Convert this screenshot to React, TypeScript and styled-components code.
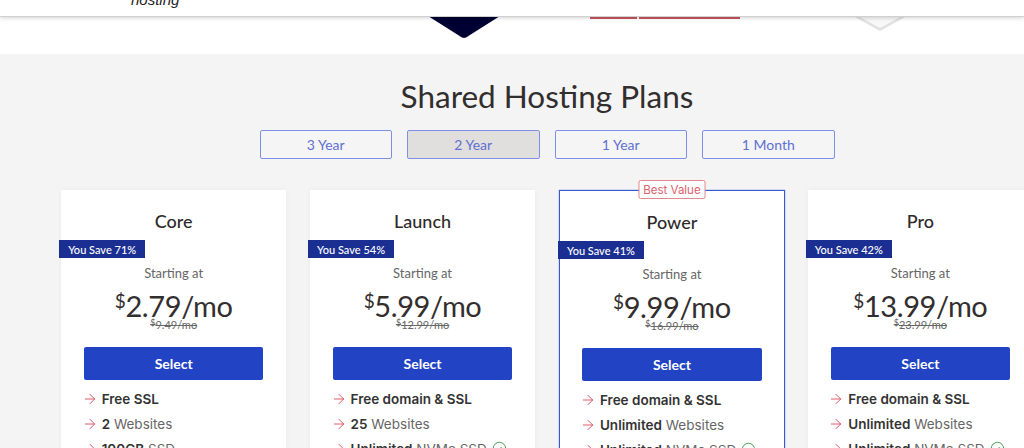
import React from "react";
import styled, { createGlobalStyle } from "styled-components";
import { ArrowRight, CircleCheck } from "lucide-react";

const GlobalStyle = createGlobalStyle`
  html, body {
    margin: 0;
    padding: 0;
    background: #fff;
    overflow: hidden;
  }
  * { box-sizing: border-box; }
`;

const plans = [
  {
    name: "Core",
    save: 71,
    price: "2.79",
    old: "9.49",
    features: [
      { strong: "Free SSL", rest: "" },
      { strong: "2", rest: "Websites" },
      { strong: "100GB", rest: "SSD" },
    ],
  },
  {
    name: "Launch",
    save: 54,
    price: "5.99",
    old: "12.99",
    features: [
      { strong: "Free domain & SSL", rest: "" },
      { strong: "25", rest: "Websites" },
      { strong: "Unlimited", rest: "NVMe SSD", check: true },
    ],
  },
  {
    name: "Power",
    save: 41,
    price: "9.99",
    old: "16.99",
    featured: true,
    features: [
      { strong: "Free domain & SSL", rest: "" },
      { strong: "Unlimited", rest: "Websites" },
      { strong: "Unlimited", rest: "NVMe SSD", check: true },
    ],
  },
  {
    name: "Pro",
    save: 42,
    price: "13.99",
    old: "23.99",
    features: [
      { strong: "Free domain & SSL", rest: "" },
      { strong: "Unlimited", rest: "Websites" },
      { strong: "Unlimited", rest: "NVMe SSD", check: true },
    ],
  },
];

const terms = ["3 Year", "2 Year", "1 Year", "1 Month"];

const App: React.FC = () => {
  return (
    <Page>
      <GlobalStyle />
      <Header>
        <Tagline>hosting</Tagline>
      </Header>

      <Hero>
        <svg width="72" height="22" viewBox="0 0 72 22">
          <path d="M0 0H72L38 21.5Q36 22.4 34 21.5Z" fill="#000033" />
        </svg>
        <RedBars>
          <RedBar $width={47} />
          <RedBar $width={101} />
        </RedBars>
        <svg width="54" height="15" viewBox="0 0 54 15">
          <path d="M0 0H54L27 15Z" fill="#e2e2e2" />
          <path d="M5 0L27 12L49 0Z" fill="#f8f8f8" />
          <path d="M17 0H37V1H17Z" fill="#bbb" />
        </svg>
      </Hero>

      <Plans>
        <Heading>Shared Hosting Plans</Heading>
        <Tabs>
          {terms.map((term) => (
            <Tab key={term} $active={term === "2 Year"}>
              {term}
            </Tab>
          ))}
        </Tabs>
        <Cards>
          {plans.map((plan) => (
            <Card key={plan.name} $featured={plan.featured}>
              {plan.featured && <BestValue>Best Value</BestValue>}
              <PlanName>{plan.name}</PlanName>
              <SaveBadge>You Save {plan.save}%</SaveBadge>
              <Starting>Starting at</Starting>
              <Price>
                <sup>$</sup>
                {plan.price}/mo
              </Price>
              <OldPrice>
                <sup>$</sup>
                {plan.old}/mo
              </OldPrice>
              <SelectButton>Select</SelectButton>
              <Features>
                {plan.features.map((f, index) => (
                  <Feature key={index}>
                    <ArrowRight size={16} strokeWidth={1.4} color="#d8505f" />
                    <span>
                      <b>{f.strong}</b> {f.rest}
                    </span>
                    {f.check && <CircleCheck size={15} strokeWidth={1.5} color="#3f9a4a" />}
                  </Feature>
                ))}
              </Features>
            </Card>
          ))}
        </Cards>
      </Plans>
    </Page>
  );
};

const Page = styled.div`
  position: relative;
  width: 1024px;
  height: 448px;
  overflow: hidden;
  font-family: "Lato", sans-serif;
  color: #333;
`;

const Header = styled.div`
  position: absolute;
  top: 0;
  left: 0;
  right: 0;
  height: 17px;
  padding-left: 131px;
  background: #fff;
  overflow: hidden;
  border-bottom: 1px solid #d0d0d0;
  box-shadow: 0 1px 4px rgba(0, 0, 0, 0.18);
  z-index: 2;
`;

const Tagline = styled.div`
  margin-top: -8px;
  font-family: "Liberation Sans", sans-serif;
  font-style: italic;
  font-size: 15px;
  line-height: 15px;
  color: #222;
`;

const Hero = styled.div`
  display: flex;
  align-items: flex-start;
  height: 54px;
  padding: 16px 0 0 428px;
  background: #fff;

  & > svg:last-child {
    margin-left: 113px;
  }
`;

const RedBars = styled.div`
  display: flex;
  gap: 2px;
  margin-left: 90px;
`;

const RedBar = styled.div<{ $width: number }>`
  width: ${(props) => props.$width}px;
  height: 3px;
  background: #c9555c;
`;

const Plans = styled.div`
  width: 1094px;
  height: 394px;
  padding-top: 21px;
  background: #f4f4f4;
  display: flex;
  flex-direction: column;
  align-items: center;
`;

const Heading = styled.h2`
  margin: 0;
  font-size: 31.5px;
  line-height: 42px;
  font-weight: 400;
  color: #332e2e;
`;

const Tabs = styled.div`
  display: flex;
  gap: 15px;
  margin-top: 13px;
`;

const Tab = styled.div<{ $active?: boolean }>`
  width: 132.5px;
  height: 29px;
  display: flex;
  align-items: center;
  justify-content: center;
  border: 1px solid #7d8fe6;
  border-radius: 2px;
  background: ${(props) => (props.$active ? "#e0dfdd" : "#f5f5f5")};
  color: #5f70d2;
  font-size: 14px;
`;

const Cards = styled.div`
  display: grid;
  grid-template-columns: repeat(4, 225px);
  column-gap: 23.9px;
  margin-top: 31px;
`;

const Card = styled.div<{ $featured?: boolean }>`
  position: relative;
  height: 300px;
  background: #fff;
  display: flex;
  flex-direction: column;
  align-items: center;
  padding-top: 19px;
  border: ${(props) => (props.$featured ? "1px solid #3a58cf" : "none")};
  margin-right: ${(props) => (props.$featured ? "-1px" : "0")};
  box-shadow: ${(props) =>
    props.$featured ? "0 0 1px #3a58cf" : "0 0 6px rgba(0, 0, 0, 0.04)"};
`;

const BestValue = styled.div`
  position: absolute;
  top: -11px;
  left: 50%;
  transform: translateX(-50%);
  width: 67px;
  height: 19px;
  display: flex;
  align-items: center;
  justify-content: center;
  background: #fff;
  border: 1px solid #e58791;
  border-radius: 2px;
  font-family: "Inter", sans-serif;
  font-size: 11.5px;
  color: #e0606c;
`;

const PlanName = styled.div`
  font-size: 18px;
  line-height: 24px;
  font-weight: 500;
  color: #2f2a2a;
`;

const SaveBadge = styled.div`
  align-self: flex-start;
  margin: 7px 0 0 -2px;
  height: 18px;
  padding: 0 9px;
  display: flex;
  align-items: center;
  background: #1b2f93;
  color: #fff;
  font-size: 11px;
  font-weight: 500;
`;

const Starting = styled.div`
  margin-top: 7px;
  font-size: 13px;
  line-height: 16px;
  color: #666;
`;

const Price = styled.div`
  margin-top: 8px;
  font-size: 29px;
  line-height: 34px;
  font-weight: 400;
  letter-spacing: -0.4px;
  color: #332e2e;

  sup {
    font-size: 19px;
    line-height: 0;
    vertical-align: 9px;
  }
`;

const OldPrice = styled.div`
  margin-top: -5px;
  font-size: 11px;
  line-height: 14px;
  color: #666;
  text-decoration: line-through;

  sup {
    font-size: 9px;
    line-height: 0;
    vertical-align: 3px;
  }
`;

const SelectButton = styled.div`
  width: 179.5px;
  height: 33px;
  margin-top: 15px;
  flex-shrink: 0;
  display: flex;
  align-items: center;
  justify-content: center;
  background: #2244c4;
  border-radius: 2px;
  color: #fff;
  font-size: 14px;
  font-weight: 700;
`;

const Features = styled.div`
  width: 180px;
  margin-top: 6px;
  display: flex;
  flex-direction: column;
  font-family: "Inter", sans-serif;
  font-size: 13.5px;
  color: #666;

  b {
    font-weight: 600;
    color: #333;
  }
`;

const Feature = styled.div`
  height: 25px;
  display: flex;
  align-items: center;
  gap: 3px;
  margin-left: -2px;
  white-space: nowrap;

  & > span {
    margin-right: 2px;
    margin-left: 1px;
  }
`;

export default App;
